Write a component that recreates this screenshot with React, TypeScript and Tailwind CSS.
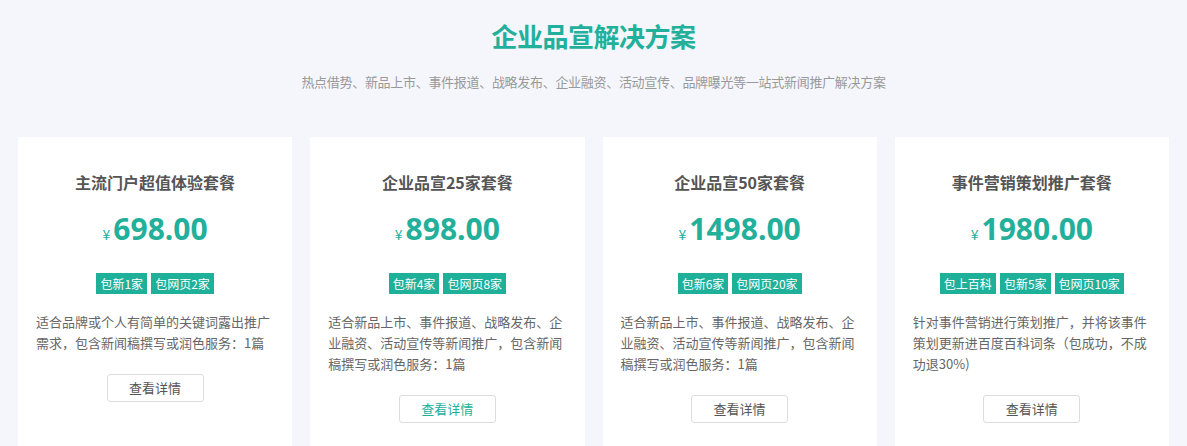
import React from "react";

type Plan = {
  title: string;
  price: string;
  tags: string[];
  desc: string;
  active?: boolean;
};

const plans: Plan[] = [
  {
    title: "主流门户超值体验套餐",
    price: "698.00",
    tags: ["包新1家", "包网页2家"],
    desc: "适合品牌或个人有简单的关键词露出推广需求，包含新闻稿撰写或润色服务：1篇",
  },
  {
    title: "企业品宣25家套餐",
    price: "898.00",
    tags: ["包新4家", "包网页8家"],
    desc: "适合新品上市、事件报道、战略发布、企业融资、活动宣传等新闻推广，包含新闻稿撰写或润色服务：1篇",
    active: true,
  },
  {
    title: "企业品宣50家套餐",
    price: "1498.00",
    tags: ["包新6家", "包网页20家"],
    desc: "适合新品上市、事件报道、战略发布、企业融资、活动宣传等新闻推广，包含新闻稿撰写或润色服务：1篇",
  },
  {
    title: "事件营销策划推广套餐",
    price: "1980.00",
    tags: ["包上百科", "包新5家", "包网页10家"],
    desc: "针对事件营销进行策划推广，并将该事件策划更新进百度百科词条（包成功，不成功退30%)",
  },
];

const cjk = { fontFamily: '"Microsoft YaHei", "Noto Sans CJK SC", "Noto Sans", sans-serif' };

export default function App() {
  return (
    <div className="h-screen w-full bg-[#f5f6fb] overflow-hidden" style={cjk}>
      <div className="flex flex-col items-center pt-[18px]">
        <h1 className="text-[26px] leading-[36px] font-bold text-[#22b09b] tracking-[-0.5px]">
          企业品宣解决方案
        </h1>
        <p className="mt-[19px] text-[13px] leading-[18px] text-[#999999] tracking-[-0.3px]">
          热点借势、新品上市、事件报道、战略发布、企业融资、活动宣传、品牌曝光等一站式新闻推广解决方案
        </p>
      </div>
      <div className="mt-[46px] px-[18px] grid grid-cols-4 gap-[18px]">
        {plans.map((p) => (
          <div key={p.title} className="bg-white h-[330px] flex flex-col items-center pt-[33px] px-[18px]">
            <div className="text-[16px] leading-[24px] font-bold text-[#555555]">{p.title}</div>
            <div className="mt-[17px] flex items-baseline text-[#22b09b] h-[36px]">
              <span className="text-[14px] mr-[3px]">¥</span>
              <span
                className="text-[30px] leading-[36px] font-bold"
                style={{ fontFamily: '"Open Sans", "Noto Sans", sans-serif' }}
              >
                {p.price}
              </span>
            </div>
            <div className="mt-[26px] flex gap-[4px]">
              {p.tags.map((t) => (
                <span
                  key={t}
                  className="bg-[#1fb09a] text-white text-[12px] leading-[21px] h-[21px] px-[4px]"
                >
                  {t}
                </span>
              ))}
            </div>
            <p className="mt-[17px] w-full text-[13px] leading-[21px] text-[#666666]">{p.desc}</p>
            <button
              className={`mt-[21px] w-[97px] h-[28px] border border-[#dddddd] rounded-[3px] text-[13px] bg-white ${
                p.active ? "text-[#22b09b]" : "text-[#555555]"
              }`}
            >
              查看详情
            </button>
          </div>
        ))}
      </div>
    </div>
  );
}
